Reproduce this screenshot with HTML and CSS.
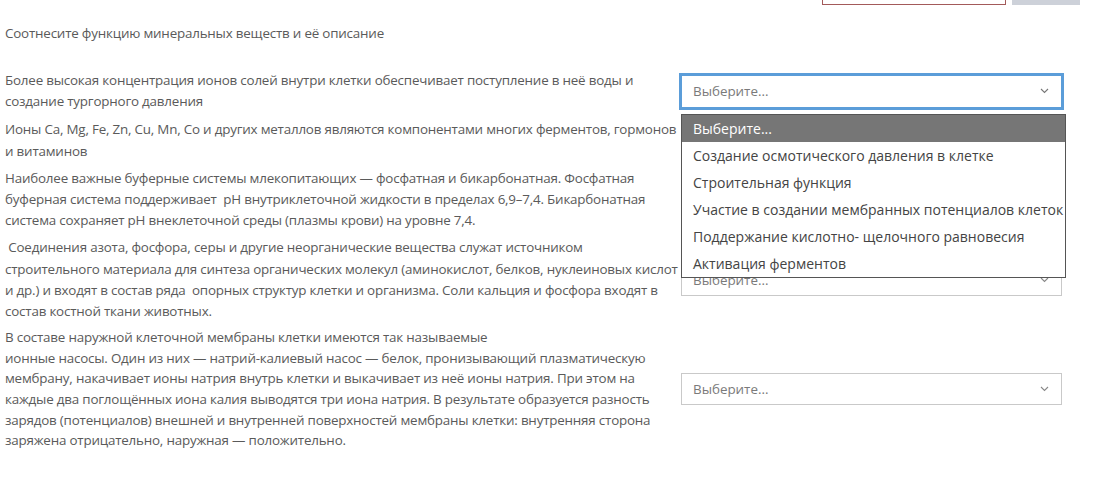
FILE: index.html
```html
<!DOCTYPE html>
<html lang="ru">
<head>
<meta charset="utf-8">
<title>Соотнесите</title>
<link rel="stylesheet" href="styles.css">
</head>
<body>
<div class="topbar">
  <div class="btn-outline"></div>
  <div class="btn-gray"></div>
</div>
<p class="title">Соотнесите функцию минеральных веществ и её описание</p>
<div class="rows">
  <div class="row row-first">
    <div class="q">Более высокая концентрация ионов солей внутри клетки обеспечивает поступление в неё воды и<br>создание тургорного давления</div>
    <div class="answer">
      <div class="select focused"><span>Выберите...</span><svg class="chev" width="9" height="6" viewBox="0 0 9 6"><polyline points="1,1 4.5,4.5 8,1" fill="none" stroke="#777" stroke-width="1.1"/></svg></div>
      <ul class="dropdown">
        <li class="active">Выберите...</li>
        <li>Создание осмотического давления в клетке</li>
        <li>Строительная функция</li>
        <li>Участие в создании мембранных потенциалов клеток</li>
        <li>Поддержание кислотно- щелочного равновесия</li>
        <li>Активация ферментов</li>
      </ul>
    </div>
  </div>
  <div class="row">
    <div class="q">Ионы Ca, Mg, Fe, Zn, Cu, Mn, Co и других металлов являются компонентами многих ферментов, гормонов<br>и витаминов</div>
    <div class="answer">
      <div class="select"><span>Выберите...</span><svg class="chev" width="9" height="6" viewBox="0 0 9 6"><polyline points="1,1 4.5,4.5 8,1" fill="none" stroke="#888" stroke-width="1.1"/></svg></div>
    </div>
  </div>
  <div class="row">
    <div class="q">Наиболее важные буферные системы млекопитающих — фосфатная и бикарбонатная. Фосфатная<br>буферная система поддерживает &nbsp;pH внутриклеточной жидкости в пределах 6,9–7,4. Бикарбонатная<br>система сохраняет pH внеклеточной среды (плазмы крови) на уровне 7,4.</div>
    <div class="answer">
      <div class="select"><span>Выберите...</span><svg class="chev" width="9" height="6" viewBox="0 0 9 6"><polyline points="1,1 4.5,4.5 8,1" fill="none" stroke="#888" stroke-width="1.1"/></svg></div>
    </div>
  </div>
  <div class="row">
    <div class="q">&nbsp;Соединения азота, фосфора, серы и другие неорганические вещества служат источником<br>строительного материала для синтеза органических молекул (аминокислот, белков, нуклеиновых кислот<br>и др.) и входят в состав ряда &nbsp;опорных структур клетки и организма. Соли кальция и фосфора входят в<br>состав костной ткани животных.</div>
    <div class="answer">
      <div class="select"><span>Выберите...</span><svg class="chev" width="9" height="6" viewBox="0 0 9 6"><polyline points="1,1 4.5,4.5 8,1" fill="none" stroke="#888" stroke-width="1.1"/></svg></div>
    </div>
  </div>
  <div class="row row-last">
    <div class="q">В составе наружной клеточной мембраны клетки имеются так называемые<br>ионные насосы. Один из них — натрий-калиевый насос — белок, пронизывающий плазматическую<br>мембрану, накачивает ионы натрия внутрь клетки и выкачивает из неё ионы натрия. При этом на<br>каждые два поглощённых иона калия выводятся три иона натрия. В результате образуется разность<br>зарядов (потенциалов) внешней и внутренней поверхностей мембраны клетки: внутренняя сторона<br>заряжена отрицательно, наружная — положительно.</div>
    <div class="answer">
      <div class="select"><span>Выберите...</span><svg class="chev" width="9" height="6" viewBox="0 0 9 6"><polyline points="1,1 4.5,4.5 8,1" fill="none" stroke="#888" stroke-width="1.1"/></svg></div>
    </div>
  </div>
</div>
</body>
</html>
```

FILE: styles.css
```css
html, body {
  margin: 0;
  padding: 0;
  background: #fff;
}
body {
  font-family: "Open Sans", "Liberation Sans", sans-serif;
  font-size: 13.4px;
  letter-spacing: -0.2px;
  color: #5a5a5a;
}
.topbar {
  display: flex;
  height: 5px;
  padding-left: 822px;
  gap: 6px;
}
.btn-outline {
  width: 182px;
  height: 4px;
  border: 1px solid #a35a5a;
  border-top: none;
}
.btn-gray {
  width: 68px;
  height: 5px;
  background: #cdd1d9;
}
.title {
  margin: 18px 0 0 5px;
  line-height: 21px;
}
.rows {
  margin-top: 26px;
  display: flex;
  flex-direction: column;
  gap: 6px;
}
.row {
  display: grid;
  grid-template-columns: 681px 381px;
  align-items: center;
}
.row-first {
  margin-bottom: 1px;
}
.row-last {
  margin-top: -1px;
}
.row-last .q {
  line-height: 20.6px;
}
.q {
  padding-left: 5px;
  line-height: 21.2px;
  white-space: nowrap;
}
.answer {
  position: relative;
}
.select {
  box-sizing: border-box;
  height: 32px;
  border: 1px solid #c9c9c9;
  background: #fff;
  display: flex;
  align-items: center;
  justify-content: space-between;
  padding: 0 12px 0 11px;
  color: #7a7a7a;
  font-size: 13.4px;
  letter-spacing: 0;
}
.select.focused {
  border: 1px solid #5b9dd9;
  box-shadow: 0 0 0 2px #5b9dd9;
  height: 33px;
}
.chev {
  display: block;
}
.dropdown {
  position: absolute;
  left: 0;
  top: 39px;
  width: 385px;
  box-sizing: border-box;
  margin: 0;
  padding: 0;
  list-style: none;
  border: 1px solid #555;
  background: #fff;
  font-size: 14px;
  letter-spacing: 0;
  color: #444;
  z-index: 5;
}
.dropdown li {
  height: 27px;
  line-height: 27px;
  padding-left: 11px;
  white-space: nowrap;
}
.dropdown li.active {
  background: #767676;
  color: #fff;
}
```
